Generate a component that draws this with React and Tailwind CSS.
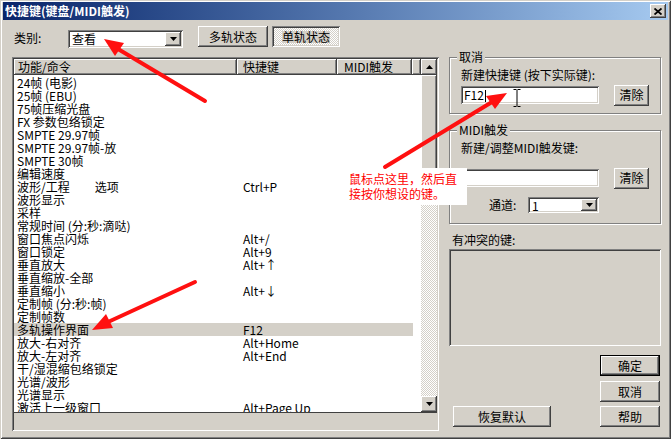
const raised = 'shadow-[inset_-1px_-1px_0_#404040,inset_1px_1px_0_#ffffff,inset_-2px_-2px_0_#808080,inset_2px_2px_0_#d4d0c8]';
const sunken = 'shadow-[inset_1px_1px_0_#808080,inset_-1px_-1px_0_#ffffff,inset_2px_2px_0_#404040,inset_-2px_-2px_0_#d4d0c8]';
const etched = 'border border-[#808080] shadow-[inset_1px_1px_0_#ffffff,1px_1px_0_#ffffff]';
const dither = 'bg-[repeating-conic-gradient(#ffffff_0_25%,#d4d0c8_0_50%)] bg-[length:2px_2px]';

const rows = [
  ['24帧 (电影)', ''],
  ['25帧 (EBU)', ''],
  ['75帧压缩光盘', ''],
  ['FX 参数包络锁定', ''],
  ['SMPTE 29.97帧', ''],
  ['SMPTE 29.97帧-放', ''],
  ['SMPTE 30帧', ''],
  ['编辑速度', ''],
  ['波形/工程', 'Ctrl+P', '选项'],
  ['波形显示', ''],
  ['采样', ''],
  ['常规时间 (分:秒:滴哒)', ''],
  ['窗口焦点闪烁', 'Alt+/'],
  ['窗口锁定', 'Alt+9'],
  ['垂直放大', 'Alt+↑'],
  ['垂直缩放-全部', ''],
  ['垂直缩小', 'Alt+↓'],
  ['定制帧 (分:秒:帧)', ''],
  ['定制帧数', ''],
  ['多轨操作界面', 'F12'],
  ['放大-右对齐', 'Alt+Home'],
  ['放大-左对齐', 'Alt+End'],
  ['干/湿混缩包络锁定', ''],
  ['光谱/波形', ''],
  ['光谱显示', ''],
  ['激活上一级窗口', 'Alt+Page Up'],
];

const Tri = ({ up }) => (
  <svg width="7" height="4" viewBox="0 0 7 4">
    <path d={up ? 'M3.5 0L7 4H0z' : 'M0 0h7L3.5 4z'} fill="#000" />
  </svg>
);

const Combo = ({ value, className }) => (
  <div className={`flex bg-white p-[2px] ${sunken} ${className}`}>
    <div className="flex-1 pl-[2px] leading-[14px]">{value}</div>
    <div className={`w-[16px] bg-[#d4d0c8] flex items-center justify-center ${raised}`}>
      <Tri />
    </div>
  </div>
);

const Btn = ({ children, className = '' }) => (
  <div className={`h-[21px] bg-[#d4d0c8] flex items-center justify-center leading-[12px] ${raised} ${className}`}>
    {children}
  </div>
);

export default function App() {
  return (
    <div className="relative w-[671px] h-[439px] overflow-hidden bg-[#d4d0c8] pt-[2px] px-[3px] font-['Noto_Sans_CJK_SC',sans-serif] text-[12px] leading-[13px] text-black shadow-[inset_1px_1px_0_#d4d0c8,inset_-1px_-1px_0_#404040,inset_2px_2px_0_#ffffff,inset_-2px_-2px_0_#808080]">
      {/* title bar */}
      <div className="h-[18px] flex items-center justify-between pl-[2px] pr-[2px] bg-linear-to-r from-[#0a246a] to-[#a6caf0]">
        <span className="text-white font-bold leading-[12px]">快捷键(键盘/MIDI触发)</span>
        <div className={`w-[16px] h-[14px] bg-[#d4d0c8] flex items-center justify-center ${raised}`}>
          <svg width="8" height="7" viewBox="0 0 8 7">
            <path d="M0.5 0.5L7.5 6.5M7.5 0.5L0.5 6.5" stroke="#000" strokeWidth="1.8" />
          </svg>
        </div>
      </div>

      {/* category row */}
      <div className="mt-[6px] h-[22px] flex items-start pl-[11px]">
        <span className="w-[54px] mt-[6px] leading-[12px]">类别:</span>
        <Combo value="查看" className="w-[115px] h-[18px] mt-[4px]" />
        <Btn className="w-[70px] ml-[15px]">多轨状态</Btn>
        <div className={`w-[68px] h-[21px] ml-[4px] flex items-center justify-center leading-[12px] ${dither} ${sunken}`}>
          <span className="bg-[#d4d0c8] mt-[1px]">单轨状态</span>
        </div>
      </div>

      {/* main */}
      <div className="mt-[9px] flex pl-[9px]">
        {/* list view */}
        <div className={`w-[427px] h-[374px] p-[2px] flex flex-col ${sunken}`}>
          <div className="h-[353px] flex">
            <div className="w-[407px] flex flex-col">
              <div className="h-[16px] flex">
                <div className={`w-[223px] pl-[4px] pt-[1px] ${raised}`}>功能/命令</div>
                <div className={`w-[100px] pl-[6px] pt-[1px] ${raised}`}>快捷键</div>
                <div className={`w-[75px] pl-[7px] pt-[1px] ${raised}`}>MIDI触发</div>
                <div className={`flex-1 ${raised}`} />
              </div>
              <div className="flex-1 bg-white overflow-hidden pt-[1px]">
                {rows.map(([name, key, extra], i) => (
                  <div key={i} className={`h-[13px] w-[399px] flex ${i === 19 ? 'bg-[#d4d0c8]' : ''}`}>
                    <div className="w-[223px] pl-[3px] whitespace-pre">
                      {name}
                      {extra && <span className="ml-[25px]">{extra}</span>}
                    </div>
                    <div className="w-[100px] pl-[6px] whitespace-pre">{key}</div>
                  </div>
                ))}
              </div>
            </div>
            <div className={`w-[16px] flex flex-col ${dither}`}>
              <div className={`h-[16px] bg-[#d4d0c8] flex items-center justify-center ${raised}`}><Tri up /></div>
              <div className={`h-[125px] bg-[#d4d0c8] ${raised}`} />
              <div className="flex-1" />
              <div className={`h-[16px] bg-[#d4d0c8] flex items-center justify-center ${raised}`}><Tri /></div>
            </div>
          </div>
          <div className="h-[1px] bg-[#404040]" />
        </div>

        {/* right column */}
        <div className="ml-[10px] w-[212px] flex flex-col">
          <div className={`relative h-[57px] px-[11px] ${etched}`}>
            <span className="absolute -top-[7px] left-[7px] px-[2px] bg-[#d4d0c8] leading-[12px]">取消</span>
            <div className="mt-[11px] leading-[12px]">新建快捷键 (按下实际键):</div>
            <div className="mt-[4px] h-[20px] flex items-center">
              <div className={`w-[139px] h-[18px] bg-white pl-[3px] pt-[2px] leading-[14px] ${sunken}`}>
                F12<span className="inline-block w-[1px] h-[12px] bg-black align-[-2px] ml-[1px]" />
              </div>
              <Btn className="w-[35px] h-[20px] ml-[15px]">清除</Btn>
            </div>
          </div>

          <div className={`relative mt-[16px] h-[94px] px-[11px] ${etched}`}>
            <span className="absolute -top-[7px] left-[7px] px-[2px] bg-[#d4d0c8] leading-[12px]">MIDI触发</span>
            <div className="mt-[11px] leading-[12px]">新建/调整MIDI触发键:</div>
            <div className="mt-[14px] h-[20px] flex items-center">
              <div className={`w-[139px] h-[18px] bg-white ${sunken}`} />
              <Btn className="w-[35px] h-[20px] ml-[15px]">清除</Btn>
            </div>
            <div className="mt-[9px] flex items-center">
              <span className="w-[67px] pl-[28px] leading-[12px]">通道:</span>
              <Combo value="1" className="w-[71px] h-[16px] leading-[12px]" />
            </div>
          </div>

          <div className="mt-[10px] ml-[3px] leading-[12px]">有冲突的键:</div>
          <div className={`mt-[3px] h-[97px] bg-[#d4d0c8] shadow-[inset_1px_1px_0_#808080,inset_-1px_-1px_0_#ffffff,inset_2px_2px_0_#404040]`} />

          <div className="mt-[9px] self-end mr-[1px] w-[60px] h-[21px] bg-black p-[1px]">
            <Btn className="w-full h-full">确定</Btn>
          </div>
          <Btn className="mt-[5px] self-end mr-[1px] w-[60px]">取消</Btn>
          <div className="mt-[4px] flex justify-between pl-[4px] pr-[1px]">
            <Btn className="w-[98px]">恢复默认</Btn>
            <Btn className="w-[60px]">帮助</Btn>
          </div>
        </div>
      </div>

      {/* annotation note */}
      <div className="absolute left-[345px] top-[168px] w-[122px] h-[37px] bg-white pl-[4px] pt-[3px] text-[#ff0000] leading-[15px]">
        <div>鼠标点这里，然后直</div>
        <div>接按你想设的键。</div>
      </div>

      {/* annotation arrows + mouse cursor */}
      <svg className="absolute inset-0 pointer-events-none" width="671" height="439">
        <g stroke="#ff1010" strokeWidth="4" strokeLinecap="round">
          <line x1="205" y1="101" x2="118" y2="49" />
          <line x1="195" y1="282" x2="108" y2="322" />
          <line x1="385" y1="167" x2="492" y2="102" />
        </g>
        <g fill="#ff1010">
          <polygon points="104,39 124,43 115,56" />
          <polygon points="92,330 106,314 113,328" />
          <polygon points="507,93 495,109 486,96" />
        </g>
        <path d="M513.5 89.5h3M517.5 89.5h3M517 90v16M513.5 106.5h3M517.5 106.5h3" stroke="#000" strokeWidth="1" fill="none" />
      </svg>
    </div>
  );
}
